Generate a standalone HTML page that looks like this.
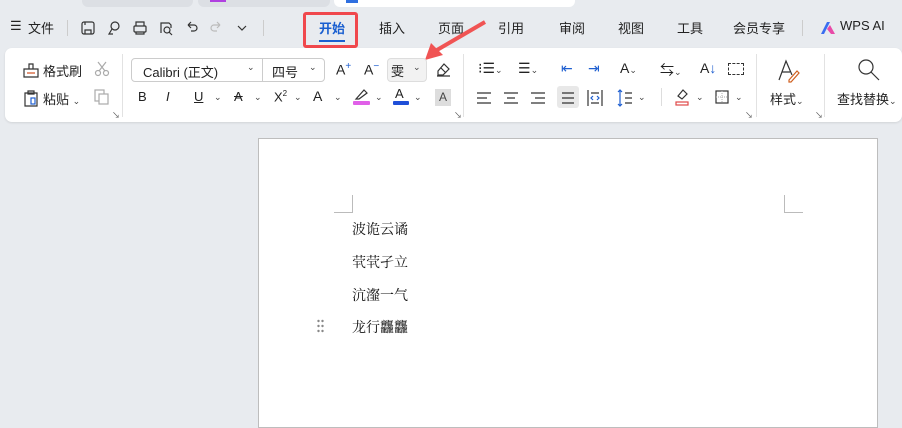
<!DOCTYPE html>
<html><head><meta charset="utf-8"><style>
*{margin:0;padding:0;box-sizing:border-box}
body{width:902px;height:420px;overflow:hidden;background:#e8ebef;font-family:"Liberation Sans","Noto Sans CJK SC",sans-serif;font-size:13px;color:#222;position:relative}
.a{position:absolute;white-space:nowrap}
.t{font-size:13px;color:#222}
.ic{position:absolute;stroke:#333;fill:none;stroke-width:1.2}
.dd{font-size:9px;color:#444}
.doc{font-family:"Noto Serif CJK SC","Noto Sans CJK SC",serif;font-size:14px;color:#111}
.m{top:18px}
</style></head><body>
<!-- top tab strip -->
<div class="a" style="left:82px;top:-6px;width:111px;height:13px;background:#dcdfe4;border-radius:6px"></div>
<div class="a" style="left:198px;top:-6px;width:132px;height:13px;background:#dcdfe4;border-radius:6px"></div>
<div class="a" style="left:334px;top:-6px;width:241px;height:13px;background:#fff;border-radius:6px"></div>
<div class="a" style="left:210px;top:0;width:16px;height:2px;background:#b040e0"></div>
<div class="a" style="left:346px;top:0;width:12px;height:3px;background:#2f6fe0"></div>

<!-- menu row -->
<div class="a t m" style="left:10px">☰</div>
<div class="a t m" style="left:28px">文件</div>
<div class="a" style="left:67px;top:20px;width:1px;height:16px;background:#ccc"></div>
<svg class="ic" style="left:80px;top:20px" width="16" height="16"><rect x="2" y="2" width="12" height="12" rx="2"/><path d="M5 14v-4h6v4M5 2v3"/></svg>
<svg class="ic" style="left:106px;top:20px" width="16" height="16"><circle cx="9" cy="6" r="4"/><path d="M6 9l-3 5h4"/></svg>
<svg class="ic" style="left:132px;top:20px" width="16" height="16"><rect x="2" y="6" width="12" height="6" rx="1"/><path d="M4 6V2h8v4M4 12v2h8v-2"/></svg>
<svg class="ic" style="left:158px;top:20px" width="16" height="16"><path d="M3 13V3h8l2 2v3"/><circle cx="9" cy="10" r="3"/><path d="M11 12l3 3"/></svg>
<svg class="ic" style="left:184px;top:20px" width="16" height="16"><path d="M4 5h6a3 3 0 010 6H7M4 5l3-3M4 5l3 3"/></svg>
<svg class="ic" style="left:208px;top:20px;stroke:#bbb" width="16" height="16"><path d="M12 5H6a3 3 0 000 6h3M12 5l-3-3M12 5l-3 3"/></svg>
<svg class="ic" style="left:236px;top:22px" width="12" height="12"><path d="M2 4l4 4 4-4"/></svg>
<div class="a" style="left:263px;top:20px;width:1px;height:16px;background:#ccc"></div>
<div class="a" style="left:303px;top:12px;width:55px;height:36px;border:3px solid #f0484d;border-radius:3px"></div>
<div class="a t m" style="left:319px;color:#1a5fd0;font-weight:bold">开始</div>
<div class="a" style="left:319px;top:40px;width:26px;height:2px;background:#1a5fd0"></div>
<div class="a t m" style="left:379px">插入</div>
<div class="a t m" style="left:438px">页面</div>
<div class="a t m" style="left:498px">引用</div>
<div class="a t m" style="left:559px">审阅</div>
<div class="a t m" style="left:618px">视图</div>
<div class="a t m" style="left:677px">工具</div>
<div class="a t m" style="left:733px">会员专享</div>
<div class="a" style="left:802px;top:20px;width:1px;height:16px;background:#ccc"></div>
<svg class="a" style="left:820px;top:21px" width="16" height="14"><path d="M1 13L7 1h3L4 13z" fill="#3a6df0"/><path d="M7 8l3-4 5 9h-4z" fill="#e84aa8"/></svg>
<div class="a t m" style="left:840px">WPS AI</div>

<!-- ribbon card -->
<div class="a" style="left:5px;top:48px;width:897px;height:74px;background:#fff;border-radius:7px;box-shadow:0 1px 2px rgba(0,0,0,.1)"></div>
<!-- arrow -->
<svg class="a" style="left:415px;top:18px" width="75" height="45"><path d="M70 4L22 32" stroke="#f05454" stroke-width="4"/><path d="M10 42l6-17 12 12z" fill="#f05454"/></svg>
<!-- group 1 -->
<svg class="ic" style="left:22px;top:61px" width="18" height="18"><path d="M2 8h14v8H2zM7 8V3h4v5"/><path d="M5 12h8" stroke="#d05020"/></svg>
<div class="a t" style="left:43px;top:61px">格式刷</div>
<svg class="ic" style="left:94px;top:61px;stroke:#aaa" width="16" height="16"><circle cx="4" cy="12" r="2.5"/><circle cx="12" cy="12" r="2.5"/><path d="M5 10l7-9M11 10L4 1"/></svg>
<svg class="ic" style="left:22px;top:89px" width="18" height="18"><path d="M3 4h12v13H3zM6 2h6v3H6z"/><rect x="9" y="9" width="4" height="6" stroke="#1f5fd0"/></svg>
<div class="a t" style="left:43px;top:89px">粘贴 <span class="dd">⌄</span></div>
<svg class="ic" style="left:94px;top:89px;stroke:#aaa" width="16" height="16"><rect x="1" y="1" width="9" height="11"/><rect x="5" y="5" width="9" height="10" fill="#fff"/></svg>
<div class="a" style="left:112px;top:110px;font-size:8px;color:#555">↘</div>
<div class="a" style="left:122px;top:54px;width:1px;height:63px;background:#e2e2e2"></div>
<!-- font -->
<div class="a" style="left:131px;top:58px;width:194px;height:24px;border:1px solid #ccc;border-radius:4px"></div>
<div class="a" style="left:262px;top:58px;width:1px;height:24px;background:#ccc"></div>
<div class="a t" style="left:143px;top:62px">Calibri (正文)</div>
<div class="a dd" style="left:247px;top:62px">⌄</div>
<div class="a t" style="left:272px;top:62px">四号</div>
<div class="a dd" style="left:309px;top:62px">⌄</div>
<div class="a" style="left:336px;top:61px;font-size:14px">A<sup style="color:#1f5fd0;font-size:10px">+</sup></div>
<div class="a" style="left:364px;top:61px;font-size:14px">A<sup style="color:#1f5fd0;font-size:10px">−</sup></div>
<div class="a" style="left:387px;top:58px;width:40px;height:24px;border:1px solid #ddd;border-radius:4px;background:#f2f2f2"></div>
<div class="a" style="left:391px;top:61px;font-size:13px">雯</div>
<div class="a dd" style="left:413px;top:62px">⌄</div>
<svg class="ic" style="left:435px;top:61px" width="16" height="16"><path d="M3 10l6-7 5 5-6 6H3z M6 7l5 5M2 15h13"/></svg>
<div class="a" style="left:138px;top:89px;font-size:13px">B</div>
<div class="a" style="left:166px;top:89px;font-size:13px;font-style:italic">I</div>
<div class="a" style="left:194px;top:89px;font-size:13px;text-decoration:underline">U</div><div class="a dd" style="left:214px;top:92px">⌄</div>
<div class="a" style="left:234px;top:89px;font-size:13px;text-decoration:line-through">A</div><div class="a dd" style="left:254px;top:92px">⌄</div>
<div class="a" style="left:274px;top:89px;font-size:13px">X<sup style="font-size:8px">2</sup></div><div class="a dd" style="left:294px;top:92px">⌄</div>
<div class="a" style="left:313px;top:88px;font-size:14px">A</div><div class="a dd" style="left:334px;top:92px">⌄</div>
<div class="a" style="left:353px;top:101px;width:17px;height:4px;background:#e060e8;border-radius:1px"></div>
<svg class="ic" style="left:354px;top:87px" width="16" height="14"><path d="M2 12L10 3l3 3-8 6z"/></svg><div class="a dd" style="left:375px;top:92px">⌄</div>
<div class="a" style="left:395px;top:86px;font-size:13px">A</div>
<div class="a" style="left:393px;top:101px;width:16px;height:4px;background:#1f4fd8;border-radius:1px"></div><div class="a dd" style="left:414px;top:92px">⌄</div>
<div class="a" style="left:435px;top:89px;width:16px;height:17px;background:#ddd;font-size:12px;text-align:center;line-height:17px;color:#444">A</div>
<div class="a" style="left:454px;top:110px;font-size:8px;color:#555">↘</div>
<div class="a" style="left:463px;top:54px;width:1px;height:63px;background:#e2e2e2"></div>
<!-- paragraph -->
<div class="a" style="left:478px;top:60px;font-size:14px">⁝☰<span class="dd">⌄</span></div>
<div class="a" style="left:518px;top:60px;font-size:14px">☰<span class="dd">⌄</span></div>
<div class="a" style="left:561px;top:60px;font-size:14px;color:#1f5fd0">⇤</div>
<div class="a" style="left:588px;top:60px;font-size:14px;color:#1f5fd0">⇥</div>
<div class="a" style="left:620px;top:60px;font-size:14px">A<span class="dd">⌄</span></div>
<div class="a" style="left:660px;top:60px;font-size:14px">⇆<span class="dd">⌄</span></div>
<div class="a" style="left:700px;top:60px;font-size:14px">A<span style="color:#1f5fd0">↓</span></div>
<div class="a" style="left:728px;top:63px;width:16px;height:12px;border:1px dashed #333"></div>
<svg class="ic" style="left:476px;top:90px" width="120" height="16"><path d="M1 3h14M1 8h10M1 13h14M28 3h14M31 8h8M28 13h14M55 3h14M59 8h10M55 13h14"/></svg>
<div class="a" style="left:557px;top:86px;width:22px;height:22px;background:#e8e8e8;border-radius:3px"></div>
<svg class="ic" style="left:561px;top:90px" width="14" height="16"><path d="M1 3h12M1 8h12M1 13h12"/></svg>
<svg class="ic" style="left:587px;top:89px" width="16" height="18"><path d="M1 1v16M15 1v16M4 4h8M4 14h8"/><path d="M6 7l-2 2 2 2M10 7l2 2-2 2" stroke="#1f5fd0"/></svg>
<svg class="ic" style="left:617px;top:89px" width="16" height="18"><path d="M3 1v16M1 3l2-2 2 2M1 15l2 2 2-2" stroke="#1f5fd0"/><path d="M8 4h7M8 9h7M8 14h7"/></svg><div class="a dd" style="left:638px;top:92px">⌄</div>
<div class="a" style="left:661px;top:88px;width:1px;height:18px;background:#ddd"></div>
<svg class="ic" style="left:674px;top:87px" width="16" height="20"><path d="M4 9l5-6 4 4-5 5z"/><rect x="2" y="15" width="12" height="3" stroke="#e04848"/></svg><div class="a dd" style="left:696px;top:92px">⌄</div>
<svg class="ic" style="left:715px;top:90px" width="14" height="14"><rect x="1" y="1" width="12" height="12"/><path d="M7 1v12M1 7h12" stroke="#bbb" stroke-dasharray="1 1"/></svg><div class="a dd" style="left:735px;top:92px">⌄</div>
<div class="a" style="left:745px;top:110px;font-size:8px;color:#555">↘</div>
<div class="a" style="left:756px;top:54px;width:1px;height:63px;background:#e2e2e2"></div>
<!-- styles -->
<svg class="ic" style="left:777px;top:58px" width="24" height="26"><path d="M2 22L9 3l6 14M5 14h8"/><path d="M12 22l8-9 2 2-8 9h-2z" stroke="#d06020"/></svg>
<div class="a t" style="left:770px;top:89px">样式<span class="dd">⌄</span></div>
<div class="a" style="left:815px;top:110px;font-size:8px;color:#555">↘</div>
<div class="a" style="left:824px;top:54px;width:1px;height:63px;background:#e2e2e2"></div>
<svg class="ic" style="left:857px;top:58px" width="24" height="24"><circle cx="9" cy="9" r="7"/><path d="M14 14l8 8"/></svg>
<div class="a t" style="left:837px;top:89px">查找替换<span class="dd">⌄</span></div>

<!-- document -->
<div class="a" style="left:258px;top:138px;width:620px;height:290px;background:#fff;border:1px solid #bdbdbd"></div>
<div class="a" style="left:334px;top:195px;width:19px;height:18px;border-right:1px solid #bbb;border-bottom:1px solid #bbb"></div>
<div class="a" style="left:784px;top:195px;width:19px;height:18px;border-left:1px solid #bbb;border-bottom:1px solid #bbb"></div>
<div class="a doc" style="left:352px;top:219px">波诡云谲</div>
<div class="a doc" style="left:352px;top:252px">茕茕孑立</div>
<div class="a doc" style="left:352px;top:285px">沆瀣一气</div>
<div class="a doc" style="left:352px;top:317px">龙行龘龘</div>
<svg class="a" style="left:317px;top:319px" width="8" height="14" fill="#888"><circle cx="1.5" cy="2" r="1.2"/><circle cx="5.5" cy="2" r="1.2"/><circle cx="1.5" cy="7" r="1.2"/><circle cx="5.5" cy="7" r="1.2"/><circle cx="1.5" cy="12" r="1.2"/><circle cx="5.5" cy="12" r="1.2"/></svg>
</body></html>
